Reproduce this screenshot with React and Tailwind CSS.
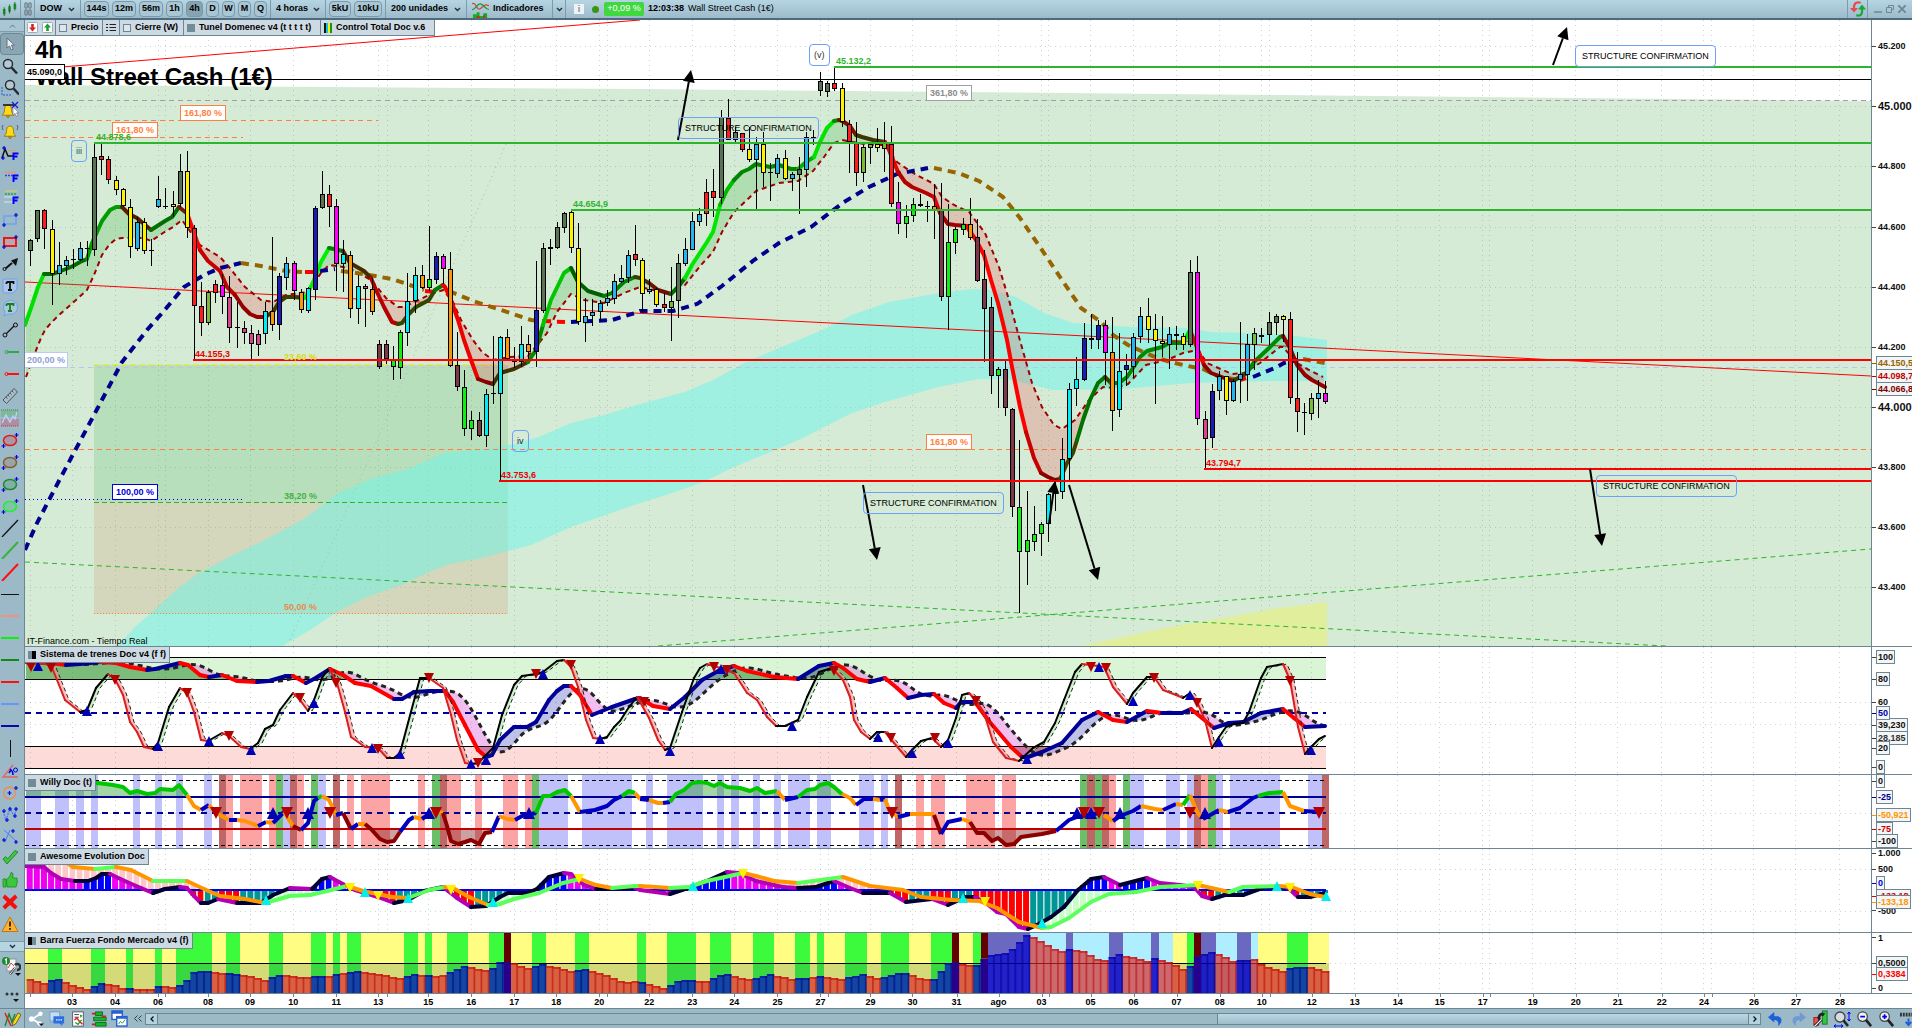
import React from "react";

/* ---------- shared geometry ---------- */
const X0 = 25;
const W = 1846;
const START = 30.2;
const STEP = 7.117;
const barX = (i) => START + STEP * i;

const P = (s) => s.trim().split(/\s+/).map((p) => p.split(",").map(Number));
const at = (pts, x) => {
  if (x <= pts[0][0]) return pts[0][1];
  for (let i = 1; i < pts.length; i++) {
    if (x <= pts[i][0]) {
      const [ax, ay] = pts[i - 1];
      const [bx, by] = pts[i];
      return bx === ax ? by : ay + ((by - ay) * (x - ax)) / (bx - ax);
    }
  }
  return pts[pts.length - 1][1];
};
const between = (a, b, x0, x1) => {
  const runs = [];
  let run = null;
  for (let x = x0; x <= x1; x += 2) {
    const above = a(x) < b(x);
    if (!run || run.above !== above) {
      if (run) run.xs.push(x);
      run = { above, xs: [x] };
      runs.push(run);
    } else run.xs.push(x);
  }
  return runs.map((r) => ({
    above: r.above,
    points: [...r.xs.map((x) => `${x},${a(x)}`), ...[...r.xs].reverse().map((x) => `${x},${b(x)}`)].join(" "),
  }));
};

/* ---------- price data ---------- */
const CANDLES = `D,239,240,251,266 D,210,210,239,242 R,209,210,229,249 Y,220,229,274,305 S,242,265,274,285 S,256,260,266,275 K,249,259,260,269 S,242,248,260,261 K,241,248,249,266 D,143,157,250,256
R,143,156,160,175 R,156,159,180,184 Y,176,180,190,195 Y,188,189,206,207 Y,199,207,247,258 S,217,222,249,251 Y,218,222,251,254 K,239,250,251,266 S,176,199,207,208 K,188,206,207,209
Y,191,204,207,217 D,154,171,204,207 Y,151,171,228,238 R,225,228,306,360 R,282,306,323,336 O,290,292,323,325 R,280,284,293,303 M,274,285,297,314 P,276,297,328,343 K,302,327,328,348
P,321,328,333,344 P,325,333,344,360 P,330,334,345,356 C,302,311,334,344 A,237,311,325,331 B,273,276,325,340 S,257,263,278,290 M,261,263,291,300 A,289,292,310,313 C,287,288,311,313
B,206,208,290,300 D,171,194,208,209 R,185,194,207,227 M,199,206,264,291 C,240,254,264,292 A,251,255,309,318 C,275,286,309,324 P,284,286,289,327 A,278,289,312,315 W,340,344,367,369
W,340,344,359,364 L,346,359,367,380 L,330,332,368,379 C,273,301,333,346 C,267,275,301,313 A,265,275,288,289 L,226,279,288,291 B,252,256,280,284 M,254,256,269,284 A,252,269,366,367
W,332,365,387,391 L,370,387,429,436 L,411,420,429,440 W,412,420,436,437 C,389,394,436,447 K,336,393,394,404 C,336,337,394,481 A,329,337,359,360 Y,347,359,362,368 C,326,344,362,367
A,335,344,352,361 B,261,310,352,367 D,243,248,311,313 K,239,247,249,265 D,222,227,248,249 D,212,213,228,233 Y,210,212,248,253 Y,223,248,322,325 S,298,316,323,342 S,299,312,316,326
S,300,303,312,321 S,290,298,303,306 S,274,281,299,304 S,265,278,282,283 S,250,255,278,283 R,225,254,260,266 Y,258,260,294,313 S,279,289,292,294 Y,288,289,305,307 R,293,304,308,312
O,267,301,308,341 D,254,263,301,318 S,238,249,264,266 S,212,221,250,250 S,208,214,222,226 R,179,192,214,226 R,169,191,198,217 D,110,117,198,204 R,99,118,140,140 D,127,132,140,142
R,133,133,150,152 Y,127,149,160,162 S,137,144,160,209 Y,132,144,173,187 K,163,172,173,201 S,154,158,174,178 Y,150,158,179,180 S,172,174,179,191 D,157,169,175,214 S,132,137,170,187
K,130,137,138,145 D,72,81,91,96 D,81,83,92,97 R,67,83,89,91 Y,83,88,122,127 R,120,124,142,173 R,122,142,173,186 O,145,147,173,182 O,143,144,148,164 Y,128,144,148,152
O,122,143,149,172 R,126,144,204,207 M,182,202,224,234 L,205,216,224,238 L,198,204,216,222 P,194,204,206,207 K,201,206,207,222 A,184,206,210,239 W,183,209,297,301 L,204,242,297,330
L,227,229,243,254 L,218,224,230,235 A,198,224,238,240 W,219,237,281,282 W,250,279,309,362 W,297,307,376,394 L,367,369,376,408 W,361,369,408,416 W,408,409,507,517 L,440,507,552,613
L,491,540,552,585 L,506,534,542,551 L,522,524,534,556 C,493,494,524,542 C,479,490,494,511 C,438,459,492,499 C,383,389,459,480 C,357,379,389,406 B,323,338,380,381 M,314,338,340,349
B,320,325,340,349 M,320,325,353,385 A,317,352,411,431 C,333,371,410,417 B,354,365,370,386 S,333,337,367,378 S,307,316,337,343 Y,298,316,330,343 Y,314,329,341,404 Y,316,341,344,357
S,327,334,345,369 S,326,334,336,350 Y,333,336,345,350 D,260,272,345,347 M,256,272,419,425 P,411,419,439,468 B,384,391,438,448 S,371,376,391,400 Y,376,376,401,415 S,379,381,401,402
S,322,374,380,403 S,334,344,375,401 O,328,333,345,370 D,328,335,337,343 D,312,322,335,345 D,314,316,323,335 Y,315,316,320,342 R,312,319,398,404 R,352,398,412,432 K,403,412,413,435
O,393,398,414,420 S,380,393,399,418 M,381,393,402,404`
  .trim()
  .split(/\s+/)
  .map((c) => {
    const [k, h, t, b, l] = c.split(",");
    return { k, h: +h, t: +t, b: +b, l: +l };
  });

const TONE = {
  D: "#5b7355", R: "#ff1c1c", Y: "#fff200", S: "#25b4ee", C: "#00edf4", K: "#000000", L: "#10f010",
  O: "#7cb83a", M: "#ff00ff", P: "#d8458c", A: "#f8960e", W: "#7c3848", B: "#1c1cb4",
};

const FAST = [
  ["#00e000", "25,325 31,308 38,287 44,274"],
  ["#006b00", "44,274 52,274 58,272 66,269 73,266 80,262 87,259"],
  ["#009c00", "87,259 92,243 102,221 110,210 116,207 122,207"],
  ["#5c1c00", "122,207 129,214 137,218 144,224 151,230"],
  ["#007000", "151,230 165,221 172,217 179,207"],
  ["#7a1800", "179,207 184,211 187,213"],
  ["#ff0000", "187,213 193,230 200,250"],
  ["#c40000", "200,250 208,261 220,271 227,287 235,295"],
  ["#960000", "235,295 243,307 250,314 257,317 265,317"],
  ["#3c3c00", "265,317 273,312 279,302 286,297 293,297 304,298"],
  ["#00f000", "304,298 307,295 314,280 321,262 329,248"],
  ["#008200", "329,248 343,251"],
  ["#4c2a00", "343,251 350,263 364,271 371,278"],
  ["#b40000", "371,278 376,290 384,307 392,322 398,324"],
  ["#2f4a00", "398,324 402,323 408,315 416,307 429,300 435,290"],
  ["#007a00", "435,290 443,285"],
  ["#f00000", "443,285 445,287 450,297 458,320 464,340 471,360 478,379"],
  ["#8c0000", "478,379 486,382 493,384"],
  ["#3e3200", "493,384 500,373 514,369 528,362"],
  ["#008a00", "528,362 536,350 543,325"],
  ["#00c800", "543,325 551,300 564,273 571,268"],
  ["#006000", "571,268 578,282 588,291 604,296"],
  ["#008000", "604,296 612,293 624,282 635,277"],
  ["#3e3a00", "635,277 640,278 649,283"],
  ["#701000", "649,283 658,290 671,294"],
  ["#006c00", "671,294 678,287 685,278"],
  ["#00e800", "685,278 692,265 707,242 713,232 720,205"],
  ["#00bc00", "720,205 727,190 734,180"],
  ["#008600", "734,180 742,172 749,169 756,164 770,167 779,165 791,169 798,169"],
  ["#00b400", "798,169 806,162 814,157"],
  ["#00e400", "814,157 820,142 827,128 834,121"],
  ["#008a00", "834,121 839,120"],
  ["#7a1000", "839,120 844,122 850,126 856,135"],
  ["#403400", "856,135 862,137 873,140 885,142"],
  ["#e80000", "885,142 887,145 891,155 898,172"],
  ["#b40000", "898,172 905,182 912,187 926,193 934,197"],
  ["#e80000", "934,197 940,213"],
  ["#a40000", "940,213 948,224 955,225 967,226"],
  ["#ff0000", "967,226 969,230 976,240 984,255 991,280 998,303 1007,340 1012,367 1020,407 1026,432"],
  ["#c80000", "1026,432 1034,458 1041,473"],
  ["#8c0000", "1041,473 1048,477 1055,480 1060,479"],
  ["#3c4400", "1060,479 1062,475 1067,463 1073,453 1077,440"],
  ["#007400", "1077,440 1083,420 1090,400 1098,383 1105,377"],
  ["#3e3a00", "1105,377 1111,383"],
  ["#008600", "1111,383 1119,383 1127,377 1133,368 1140,357 1147,351 1162,347 1169,343 1183,343"],
  ["#00e000", "1183,343 1190,330"],
  ["#f00000", "1190,330 1198,350 1204,365"],
  ["#8a0000", "1204,365 1211,373 1227,379 1233,381"],
  ["#3c3c00", "1233,381 1247,373"],
  ["#008a00", "1247,373 1254,362 1269,348 1280,337 1283,336"],
  ["#960000", "1283,336 1290,348 1297,365 1305,375 1312,380 1325,387"],
];
const FAST_PTS = FAST.flatMap(([, s]) => P(s));
const SIGNAL = "26,377 35,353 41,338 45,330 51,323 59,315 67,308 76,300 87,290 94,275 102,255 109,245 116,239 122,238 144,238 151,241 163,233 173,227 182,220 200,245 220,257 229,267 245,287 261,300 273,302 286,295 300,293 308,292 321,273 329,265 343,267 355,271 371,280 386,298 398,307 404,307 429,295 443,290 453,302 461,320 473,340 482,352 493,360 510,357 528,356 539,343 547,333 557,312 571,294 584,300 604,303 624,293 640,287 671,294 685,285 701,265 713,252 722,232 734,212 749,198 756,191 779,183 798,181 813,171 824,157 834,143 842,140 869,145 885,145 897,162 913,173 934,184 942,197 954,205 969,212 985,233 999,267 1009,300 1019,337 1032,383 1042,407 1054,425 1062,429 1075,420 1089,400 1103,387 1115,388 1128,384 1146,365 1167,360 1183,353 1198,350 1207,363 1232,374 1244,373 1260,363 1280,347 1283,347 1297,363 1309,370 1323,377";
const SIGNAL_PTS = P(SIGNAL);
const NAVY = "#00008c";
const OCHRE = "#966400";
const LONG = [
  [NAVY, "25,550 37,523 61,477 94,415 122,362 147,330 163,312 184,287 204,275 220,268 241,263"],
  [OCHRE, "241,263 261,266 286,271 302,272"],
  ["#ff0000", "305,272 314,272"],
  [NAVY, "320,271 335,269"],
  [OCHRE, "341,271 363,274 392,279 416,287 424,290"],
  ["#ff0000", "425,291 436,292"],
  [OCHRE, "449,291 473,301 498,309 531,320 543,321"],
  ["#ff0000", "543,321 565,322"],
  [NAVY, "571,322 612,320 635,313 640,311 673,311 697,304 722,286 754,260 779,243 811,227 844,202 869,187 897,174 928,168"],
  [OCHRE, "934,168 958,173 979,181 1003,197 1020,218 1040,247 1060,277 1081,308 1101,322 1113,335 1128,345 1150,355 1167,361 1183,365 1203,369 1220,377 1240,380"],
  ["#ff0000", "1240,380 1246,378"],
  [NAVY, "1253,377 1277,367 1284,363 1298,360"],
  [OCHRE, "1303,359 1325,363"],
];
const CLOUD = "118,646 135,627 151,613 176,590 196,575 233,555 261,542 302,520 339,493 371,479 408,469 445,453 486,449 514,444 539,437 571,423 604,415 640,404 685,392 713,380 746,362 820,331 852,315 889,302 934,294 971,289 991,290 1016,297 1044,313 1073,323 1130,327 1187,328 1211,332 1277,334 1296,336 1327,340 1327,381 1272,381 1191,383 1122,389 1052,390 1028,384 1007,379 979,379 938,387 885,402 852,413 828,425 803,438 775,450 734,467 701,483 669,494 640,503 571,527 531,545 482,558 449,564 429,572 404,584 367,597 335,613 310,630 282,646";

/* ---------- time axis ---------- */
const DAYS = "72:03 115:04 158:06 208:08 250:09 293:10 336:11 378:13 428:15 471:16 514:17 556:18 599:20 649:22 692:23 734:24 777:25 820:27 870:29 912:30 956:31 998:ago 1041:03 1090:05 1133:06 1176:07 1219:08 1261:10 1311:12 1354:13 1397:14 1439:15 1482:17 1532:19 1575:20 1617:21 1661:22 1703:24 1753:26 1795:27 1839:28"
  .split(" ")
  .map((d) => { const [x, t] = d.split(":"); return { x: +x, t }; });
const GRID_X = [30, ...DAYS.map((d) => d.x), 165, 387, 607, 828, 1048, 1269, 1489, 1711];

/* ---------- generic pieces ---------- */
const pctX = (x) => `${((x - X0) / W) * 100}%`;

function Grid({ y0, h, rows = [] }) {
  return (
    <g stroke="#7f8f86" strokeOpacity="0.38" strokeWidth="1" strokeDasharray="1 4" shapeRendering="crispEdges">
      {GRID_X.map((x) => <line key={x} x1={x} x2={x} y1={y0} y2={y0 + h} />)}
      {rows.map((y) => <line key={y} x1={X0} x2={X0 + W} y1={y} y2={y} />)}
    </g>
  );
}

function Row({ y0, h, axis, title, children, overlay }) {
  return (
    <div className="flex min-h-0 border-b border-[#6c8791]">
      <div className="relative min-w-0 flex-1 overflow-hidden border-r border-[#6c8791] bg-white">
        <svg className="absolute inset-0 h-full w-full" viewBox={`${X0} ${y0} ${W} ${h}`} preserveAspectRatio="none">
          {children}
        </svg>
        {overlay}
        {title}
      </div>
      <div className="relative w-10 shrink-0 overflow-hidden bg-white">
        {axis.map(([v, y, kind, color], i) => (
          <div key={i} className="absolute left-0 flex -translate-y-1/2 items-center" style={{ top: `${((y - y0) / h) * 100}%` }}>
            <span className="h-px w-1 shrink-0" style={{ backgroundColor: color || "#3c4a50" }} />
            <span
              className={
                kind === "box"
                  ? "border border-[#6c8791] bg-[#f3f5f6] px-px text-[9px] leading-3 font-bold whitespace-nowrap"
                  : kind === "big"
                  ? "px-0.5 text-[11px] leading-3 font-bold whitespace-nowrap"
                  : "px-0.5 text-[9px] leading-3 font-bold whitespace-nowrap"
              }
              style={{ color: color || "#101010" }}
            >
              {v}
            </span>
          </div>
        ))}
      </div>
    </div>
  );
}

function Title({ text, swatch }) {
  return (
    <button className="absolute top-0 left-0 flex h-4 items-center gap-1 border-r border-b border-[#6c8791] bg-[#cddae3] px-[3px] text-[9px] font-bold text-black">
      <span className="flex h-2 w-2">{swatch.map((c, i) => <span key={i} className="h-2 flex-1" style={{ backgroundColor: c }} />)}</span>
      {text}
    </button>
  );
}

function Tri({ x, y, up, color, s = 6 }) {
  const d = up ? -1 : 1;
  return <polygon points={`${x - s},${y - s * d} ${x + s},${y - s * d} ${x},${y + s * d}`} fill={color} />;
}

/* ---------- main price chart ---------- */
const Y0 = 20;
const H = 626;
const pctY = (y) => `${((y - Y0) / H) * 100}%`;

function Tag({ x, y, className, children }) {
  return (
    <span className={`absolute -translate-y-1/2 text-[9px] leading-3 whitespace-nowrap ${className}`} style={{ left: pctX(x), top: pctY(y) }}>
      {children}
    </span>
  );
}

function Arrow({ x1, y1, x2, y2 }) {
  const a = Math.atan2(y2 - y1, x2 - x1);
  const bx = x2 - 12 * Math.cos(a);
  const by = y2 - 12 * Math.sin(a);
  const nx = -Math.sin(a) * 6;
  const ny = Math.cos(a) * 6;
  return (
    <g>
      <line x1={x1} y1={y1} x2={bx} y2={by} stroke="#000" strokeWidth="2" />
      <polygon points={`${x2},${y2} ${bx + nx},${by + ny} ${bx - nx},${by - ny}`} fill="#000" />
    </g>
  );
}

const PRICE_AXIS = [
  ["45.200", 46], ["45.000", 106, "big"], ["44.800", 166], ["44.600", 227], ["44.400", 287], ["44.200", 347],
  ["44.000", 407, "big"], ["43.800", 467], ["43.600", 527], ["43.400", 587],
  ["44.150,5", 363, "box", "#966400"], ["44.098,7", 376, "box", "#c00000"], ["44.066,8", 389, "box", "#800000"],
];

function MainChart() {
  const ribbons = between((x) => at(FAST_PTS, x), (x) => at(SIGNAL_PTS, x), 26, 1325);
  const hl = (y, x, c, extra) => <line key={`${y}-${x}`} x1={x} x2={1871} y1={y} y2={y} stroke={c} {...extra} />;
  return (
    <Row
      y0={Y0}
      h={H}
      axis={PRICE_AXIS}
      title={
        <div className="absolute top-0 left-0 flex h-4 items-stretch border-r border-b border-[#6c8791] bg-[#cddae3] text-[9px] font-bold text-black">
          <div className="flex w-[31px] items-center justify-center gap-1 border-r border-[#6c8791]">
            <MiniArrow color="#e02020" down />
            <MiniArrow color="#18a030" />
          </div>
          <button className="flex w-[47px] items-center gap-1 border-r border-[#6c8791] pl-[3px]"><i className="h-2 w-2 border border-[#6c8791] bg-[#dde6ec]" />Precio</button>
          <button className="flex w-[17px] items-center justify-center border-r border-[#6c8791]" aria-label="Lista">
            <svg width="10" height="9" viewBox="0 0 10 9" stroke="#222" fill="none"><path d="M0 1.5h2M3.5 1.5H10M0 4.5h2M3.5 4.5H10M0 7.5h2M3.5 7.5H10" /></svg>
          </button>
          <button className="flex w-[64px] items-center gap-1 border-r border-[#6c8791] pl-[3px]"><i className="h-2 w-2 border border-[#6c8791] bg-[#dde6ec]" />Cierre (W)</button>
          <button className="flex w-[137px] items-center gap-1 border-r border-[#6c8791] pl-[3px] whitespace-nowrap"><i className="h-2 w-2 bg-[#718b97]" />Tunel Domenec v4 (t t t t t)</button>
          <button className="flex w-[113px] items-center gap-1 pl-[3px] whitespace-nowrap">
            <i className="flex h-[10px] w-2">
              <b className="flex-1 bg-[#111]" /><b className="flex-1 bg-[#00c8e8]" /><b className="flex-1 bg-[#fff000]" /><b className="flex-1 bg-[#1a8f1a]" />
            </i>
            Control Total Doc v.6
          </button>
        </div>
      }
      overlay={
        <>
          <span className="absolute -translate-y-1/2 text-2xl leading-7 font-bold" style={{ left: pctX(35), top: pctY(50) }}>4h</span>
          <span className="absolute -translate-y-1/2 text-2xl leading-7 font-bold whitespace-nowrap" style={{ left: pctX(35), top: pctY(77) }}>Wall Street Cash (1€)</span>
          <Tag x={25} y={72} className="border border-l-0 border-black bg-white px-[2px] py-px font-bold">45.090,0</Tag>
          <Tag x={180} y={113} className="border border-[#ff7f40] bg-white px-[3px] py-px font-bold text-[#ff7f40]">161,80 %</Tag>
          <Tag x={112} y={130} className="border border-[#ff7f40] bg-white px-[3px] py-px font-bold text-[#ff7f40]">161,80 %</Tag>
          <Tag x={96} y={137} className="font-bold text-[#2db52d]">44.878,6</Tag>
          <Tag x={71} y={151} className="rounded border border-[#6fa0f5] px-1 py-1 text-[#22556a]">iii</Tag>
          <Tag x={809} y={55} className="rounded border border-[#6fa0f5] bg-white px-1 py-1 text-[#333]">(v)</Tag>
          <Tag x={512} y={441} className="rounded border border-[#6fa0f5] px-1 py-1 text-[#223]">iv</Tag>
          <Tag x={836} y={61} className="font-bold text-[#2db52d]">45.132,2</Tag>
          <Tag x={573} y={204} className="font-bold text-[#2db52d]">44.654,9</Tag>
          <Tag x={926} y={93} className="border border-[#a0a0a0] bg-white px-[3px] py-px font-bold text-[#8c8c8c]">361,80 %</Tag>
          <Tag x={926} y={442} className="border border-[#ff7f40] bg-white px-[3px] py-px font-bold text-[#ff7f40]">161,80 %</Tag>
          <Tag x={678} y={128} className="rounded border border-[#6fa0f5] px-[6px] py-1 text-black">STRUCTURE CONFIRMATION</Tag>
          <Tag x={1575} y={56} className="rounded border border-[#6fa0f5] bg-white px-[6px] py-1 text-black">STRUCTURE CONFIRMATION</Tag>
          <Tag x={863} y={503} className="rounded border border-[#6fa0f5] px-[6px] py-1 text-black">STRUCTURE CONFIRMATION</Tag>
          <Tag x={1596} y={486} className="rounded border border-[#6fa0f5] px-[6px] py-1 text-black">STRUCTURE CONFIRMATION</Tag>
          <Tag x={195} y={354} className="font-bold text-[#f00000]">44.155,3</Tag>
          <Tag x={501} y={475} className="font-bold text-[#f00000]">43.753,6</Tag>
          <Tag x={1206} y={463} className="font-bold text-[#f00000]">43.794,7</Tag>
          <Tag x={25} y={360} className="border border-l-0 border-[#bcc8f6] bg-white px-[2px] py-px font-bold text-[#8e9fd2]">200,00 %</Tag>
          <Tag x={284} y={357} className="font-bold text-[#d8d820]">23,60 %</Tag>
          <Tag x={284} y={496} className="font-bold text-[#3fb53f]">38,20 %</Tag>
          <Tag x={284} y={607} className="font-bold text-[#e8894e]">50,00 %</Tag>
          <Tag x={112} y={492} className="border border-[#0000dc] bg-white px-[3px] py-px font-bold text-[#0000dc]">100,00 %</Tag>
          <Tag x={27} y={641} className="text-black">IT-Finance.com - Tiempo Real</Tag>
        </>
      }
    >
      <polygon points="25,85 640,89 1280,95 1871,101 1871,646 25,646" fill="#d5ebd6" />
      <Grid y0={Y0} h={H} rows={[46, 106, 166, 227, 287, 347, 407, 467, 527, 587]} />
      <polygon points="1081,646 1171,627 1252,613 1272,609 1327,602 1327,646" fill="#e1ee9c" />
      <rect x="94" y="365" width="414" height="137" fill="rgb(57,174,64)" fillOpacity="0.18" />
      <rect x="94" y="502" width="414" height="112" fill="rgb(213,129,64)" fillOpacity="0.18" />
      <polygon points={CLOUD} fill="rgb(105,245,234)" fillOpacity="0.5" />
      <line x1="290" y1="640" x2="506" y2="144" stroke="#9fbf9f" strokeDasharray="1 4" />
      <g shapeRendering="crispEdges" fill="none">
        {hl(79.5, 25, "#000")}
        {hl(100.5, 25, "#a79aab", { strokeDasharray: "5 4" })}
        {hl(449.5, 25, "#ff7f40", { strokeDasharray: "5 4" })}
        {hl(367.5, 25, "#bcc3f4", { strokeDasharray: "5 4" })}
        <path d="M25 120.500H378M25 137.500H243" stroke="#ff7f40" strokeDasharray="5 4" />
        <path d="M25 499.500H243" stroke="#0000c8" strokeDasharray="1 3" />
        <path d="M94 364.500H508" stroke="#f4f400" strokeWidth="1" strokeDasharray="6 3" />
        <path d="M94 502.500H508" stroke="#2db52d" strokeDasharray="5 3" />
        <path d="M94 613.500H508" stroke="#ff7f40" strokeDasharray="1 2" />
      </g>
      <path d="M25 562L1666 646M658 646L1871 549" stroke="#2db52d" strokeDasharray="5 4" fill="none" />
      <path d="M25 70L640 20M25 282L1871 376" stroke="#ff0000" strokeWidth="1" fill="none" />
      {ribbons.map((r, i) => (
        <polygon key={i} points={r.points} fill={r.above ? "rgb(50,175,50)" : "rgb(240,60,60)"} fillOpacity="0.22" />
      ))}
      <polyline points={SIGNAL} fill="none" stroke="#a00000" strokeWidth="2" strokeDasharray="5 4" />
      {LONG.map(([c, s], i) => <polyline key={i} points={s} fill="none" stroke={c} strokeWidth="4" strokeDasharray="8 6" />)}
      {FAST.map(([c, s], i) => <polyline key={i} points={s} fill="none" stroke={c} strokeWidth="4" strokeLinejoin="round" strokeLinecap="round" />)}
      <g shapeRendering="crispEdges">
        {CANDLES.map((c, i) => {
          const x = Math.round(barX(i));
          return (
            <g key={i}>
              <rect x={x} y={c.h} width="1" height={Math.max(1, c.l - c.h)} fill="#000" />
              <rect x={x - 2} y={c.t} width="5" height={Math.max(1, c.b - c.t)} fill="#000" />
              {c.b - c.t > 2 && <rect x={x - 1} y={c.t + 1} width="3" height={c.b - c.t - 2} fill={TONE[c.k]} />}
            </g>
          );
        })}
      </g>
      <g shapeRendering="crispEdges">
        {[[67, 834], [143, 94], [210, 571]].map(([y, x]) => hl(y, x, "#2db52d", { strokeWidth: 2 }))}
        {[[360, 193], [481, 499], [469, 1204]].map(([y, x]) => hl(y, x, "#ff0000", { strokeWidth: 2 }))}
      </g>
      <Arrow x1={678} y1={140} x2={691} y2={70} />
      <Arrow x1={1553} y1={65} x2={1567} y2={27} />
      <Arrow x1={863} y1={485} x2={877} y2={560} />
      <Arrow x1={1069} y1={485} x2={1098} y2={580} />
      <Arrow x1={1049} y1={524} x2={1055} y2={481} />
      <Arrow x1={1590} y1={469} x2={1602} y2={546} />
    </Row>
  );
}

function MiniArrow({ color, down }) {
  return (
    <svg width="11" height="11" viewBox="0 0 11 11">
      <rect x="0.500" y="0.500" width="10" height="10" rx="1" fill="#fff" stroke="#9aacb6" />
      <path d={down ? "M5.500 9.500L2 5.500h2.200V2h2.600v3.500H9z" : "M5.500 1.500L2 5.500h2.200V9h2.600V5.500H9z"} fill={color} />
    </svg>
  );
}

/* ---------- "Sistema de trenes" ---------- */
const OSC = P("25,663 44,664 51,665 65,700 80,712 87,710 96,688 108,674 115,679 123,695 130,722 137,732 144,747 153,749 158,743 169,707 180,688 187,693 194,712 201,740 208,741 222,733 229,736 241,747 250,749 258,743 265,729 273,725 280,710 293,693 300,700 308,711 314,700 322,678 329,668 337,683 345,712 351,737 365,747 378,748 387,758 394,758 400,753 408,723 420,678 429,678 443,688 451,715 457,740 465,763 471,764 478,763 486,755 493,748 502,715 514,685 522,676 536,674 543,672 557,661 564,660 571,667 578,687 586,720 593,738 600,739 607,737 614,727 620,721 629,707 637,697 640,702 649,718 658,740 665,750 670,748 682,712 694,678 700,668 707,664 720,668 734,673 747,693 757,700 767,717 776,726 785,726 798,720 807,697 819,672 832,668 843,680 850,697 854,720 861,732 870,739 877,732 885,732 894,743 906,757 912,750 921,741 932,738 941,747 948,740 956,718 962,695 969,693 977,702 984,713 993,742 1006,758 1019,761 1033,748 1044,742 1055,723 1064,700 1075,672 1082,664 1091,665 1104,667 1113,687 1127,704 1133,693 1147,677 1154,677 1163,690 1176,695 1183,698 1190,693 1197,702 1205,720 1212,748 1219,737 1226,727 1234,724 1243,723 1249,712 1261,678 1267,667 1283,664 1290,680 1298,727 1305,754 1311,747 1319,739 1325,736");
const TREND = P("25,662 51,663 66,665 80,664 100,662 116,663 130,667 147,670 155,669 180,663 188,665 200,675 209,677 222,675 237,681 257,682 269,681 286,676 293,676 306,683 314,679 330,669 343,675 355,683 371,686 394,699 402,699 414,692 429,691 445,691 453,702 465,725 478,750 486,757 492,755 500,740 514,727 527,727 536,722 549,700 557,691 564,686 571,686 580,695 592,715 612,707 635,699 640,698 653,706 670,709 685,697 702,680 720,670 734,666 747,671 774,677 798,679 819,666 834,663 843,668 857,679 870,682 885,678 897,688 908,698 921,695 934,694 944,703 956,708 961,702 975,702 988,720 1011,747 1022,757 1028,757 1042,752 1062,743 1082,720 1098,712 1113,720 1127,722 1147,711 1162,713 1182,713 1191,709 1202,718 1214,728 1229,723 1243,722 1261,713 1283,709 1294,718 1305,727 1325,726");
const lagged = (x) => {
  let t = 0;
  for (let k = 4; k <= 26; k += 2) t += at(TREND, x - k);
  return t / 12;
};
const poly = (fn, x0, x1, step = 3) => {
  const out = [];
  for (let x = x0; x <= x1; x += step) out.push(`${x},${fn(x).toFixed(1)}`);
  return out.join(" ");
};
const colored = (pts, up, down) =>
  pts.slice(1).map((p, i) => ({ a: pts[i], b: p, c: p[1] > pts[i][1] ? down : up }));

const T1_DOWN = P("31,667 51,668 115,680 187,693 229,736 300,698 336,683 378,749 429,678 478,763 536,674 571,665 644,702 714,667 727,670 834,671 891,738 935,738 976,701 1091,667 1106,668 1154,678 1197,703 1290,681");
const T1_UP = P("38,666 87,711 158,746 209,741 251,750 314,703 372,748 400,754 471,764 486,760 543,674 600,739 670,751 721,669 792,726 878,737 912,753 948,743 1027,759 1099,667 1133,701 1190,695 1219,742 1311,750");

function Segs({ pts, up, down, w }) {
  return colored(pts, up, down).map((s, i) => (
    <line key={i} x1={s.a[0]} y1={s.a[1]} x2={s.b[0]} y2={s.b[1]} stroke={s.c} strokeWidth={w} strokeLinecap="round" />
  ));
}

function TrenesChart() {
  const tr = (x) => at(TREND, x);
  const osc = (x) => at(OSC, x);
  return (
    <Row
      y0={647}
      h={127}
      title={<Title text="Sistema de trenes Doc v4 (f f)" swatch={["#718b97", "#000"]} />}
      axis={[
        ["100", 657, "box"], ["80", 679, "box"], ["60", 702], ["39,230", 725, "box"], ["28,185", 738, "box", "#333"],
        ["20", 748, "box"], ["50", 713, "box", "#0000a8"], ["0", 767, "box"],
      ]}
    >
      <rect x="25" y="657" width="1301" height="22" fill="#d9f5d5" />
      <rect x="25" y="746" width="1301" height="22" fill="#fddbd9" />
      <Grid y0={647} h={127} rows={[702, 724]} />
      {between(tr, () => 679, 26, 1325).filter((r) => r.above).map((r, i) => <polygon key={i} points={r.points} fill="#0a780a" fillOpacity="0.45" />)}
      {between(() => 746, tr, 26, 1325).filter((r) => r.above).map((r, i) => <polygon key={i} points={r.points} fill="#8c2020" fillOpacity="0.5" />)}
      {between(tr, lagged, 30, 1325).map((r, i) => <polygon key={i} points={r.points} fill={r.above ? "#7078cc" : "#e070dc"} fillOpacity="0.45" />)}
      {between(osc, (x) => osc(x - 4), 30, 1325).map((r, i) => <polygon key={i} points={r.points} fill={r.above ? "#a8e8a8" : "#ff9090"} fillOpacity="0.6" />)}
      <path d="M25 657.500H1326M25 679.500H1326M25 746.500H1326M25 768.500H1326" stroke="#000" shapeRendering="crispEdges" />
      <path d="M25 713H1326" stroke="#0000a0" strokeWidth="2" strokeDasharray="6 5" shapeRendering="crispEdges" />
      <polyline points={poly(lagged, 30, 1325)} fill="none" stroke="#222" strokeWidth="3" strokeDasharray="5 4" />
      <Segs pts={TREND} up="#000096" down="#ff0000" w="4" />
      <polyline points={poly((x) => osc(x - 4), 30, 1325, 2)} fill="none" stroke="#222" strokeWidth="1" strokeDasharray="4 3" />
      <Segs pts={OSC} up="#000" down="#d82020" w="2" />
      {T1_DOWN.map(([x, y]) => <Tri key={x} x={x} y={y} s={5} color="#b40000" />)}
      {T1_UP.map(([x, y]) => <Tri key={x} x={x} y={y} s={5} up color="#0000b4" />)}
    </Row>
  );
}

/* ---------- "Willy" ---------- */
const WILLY_BANDS = {
  "#c0c0fb": "26,41 55,69 76,84 91,98 133,140 155,162 176,183 204,212 283,290 318,326 539,568 582,632 646,653 667,703 717,724 731,739 753,760 774,781 788,810 817,831 859,874 881,888 1130,1144 1166,1180 1187,1194 1216,1223 1230,1280 1308,1322",
  "#fca3a3": "226,233 240,262 269,276 297,304 347,354 361,390 418,425 447,461 475,482 503,518 525,532 916,924 931,945 966,995 1002,1016 1109,1116 1201,1208",
  "#bf6767": "219,226 290,297 333,340 440,447 895,902 1087,1095 1102,1109 1194,1201 1322,1329",
  "#69c069": "276,283 311,318 432,440 532,539 1080,1087 1095,1102 1123,1130 1208,1216",
};
const G = "#00c800", O = "#ff9600", B = "#0000c0", D = "#8c0000";
const WILLY = [
  [G, "25,784 98,783 113,785 123,787 130,793 137,791 147,794 155,793 160,789 173,790 179,785 187,795"],
  [O, "187,795 194,806 201,810"], [B, "201,810 209,805"], [O, "209,805 216,813 229,820"], [B, "229,820 237,820"],
  [O, "237,820 245,821 258,826"], [B, "258,826 266,822"], [O, "266,822 273,823"], [B, "273,823 284,812"],
  [O, "284,812 293,826"], [D, "293,826 301,830"], [B, "301,830 308,823 314,801 318,798"], [G, "318,798 322,796"],
  [O, "322,796 329,800 336,815"], [B, "336,815 343,813"], [D, "343,813 351,829"], [B, "351,829 358,824"], [O, "358,824 365,824"],
  [D, "365,824 371,829 380,839 387,842 394,841 400,832"], [B, "400,832 409,820 414,817"], [O, "414,817 422,819"], [B, "422,819 429,814"],
  [O, "429,814 436,811 443,813"], [D, "443,813 447,826 451,841 458,844 465,842 471,840 479,844 485,833 492,832"],
  [B, "492,832 499,816"], [O, "499,816 507,819 515,820"], [B, "515,820 522,816 536,813"], [G, "536,813 543,796 550,796 557,792 565,790 571,796"],
  [O, "571,796 580,812"], [B, "580,812 595,810 607,806 614,800 622,796"], [G, "622,796 629,791 635,793"], [O, "635,793 640,799"], [B, "640,799 649,800"],
  [O, "649,800 658,803 663,803"], [B, "663,803 670,802"],
  [G, "670,802 676,794 684,790 692,783 700,782 707,783 714,786 720,783 727,787 740,788 750,791 757,788 765,793 777,791"],
  [O, "777,791 785,800"], [B, "785,800 798,797"], [G, "798,797 807,790 815,789 820,785 828,783 834,787 842,794"], [O, "842,794 850,798 856,805"],
  [B, "856,805 864,799 873,799"], [O, "873,799 880,800"], [B, "880,800 885,799"], [O, "885,799 889,810 898,817"], [B, "898,817 910,814"], [O, "910,814 934,814"],
  [D, "934,815 941,834"], [B, "941,834 948,822 962,819"], [O, "962,819 970,822"],
  [D, "970,822 977,833 984,833 992,841 998,838 1006,845 1014,844 1021,837 1042,834 1056,831"], [B, "1056,831 1062,826 1069,820 1077,817 1100,813"],
  [O, "1104,815 1113,821"], [B, "1113,821 1120,816 1133,811 1141,806"], [O, "1141,806 1155,809 1163,810"], [B, "1163,810 1176,804"], [O, "1176,804 1183,805"],
  [G, "1183,805 1190,795"], [O, "1190,795 1197,812 1203,819"], [B, "1203,819 1212,814 1219,810"], [O, "1219,810 1228,812"], [B, "1228,812 1240,808 1253,798 1258,796"],
  [G, "1258,796 1269,793 1283,792"], [O, "1283,792 1290,806 1304,811"], [B, "1304,811 1319,812"],
];
const WILLY_PTS = WILLY.flatMap(([, s]) => P(s));

function WillyChart() {
  const w = (x) => at(WILLY_PTS, x);
  return (
    <Row
      y0={775}
      h={73}
      title={<Title text="Willy Doc (t)" swatch={["#718b97"]} />}
      axis={[
        ["0", 781, "box"], ["-25", 797, "box", "#000090"], ["-50,921", 815, "box", "#ff9600"], ["-75", 829, "box", "#c80000"], ["-100", 841, "box"],
      ]}
    >
      <Grid y0={775} h={73} rows={[813]} />
      {Object.entries(WILLY_BANDS).map(([c, s]) => P(s).map(([a, b]) => <rect key={c + a} x={a} y="775" width={b - a} height="73" fill={c} />))}
      {between(w, () => 797, 26, 1319).filter((r) => r.above).map((r, i) => <polygon key={i} points={r.points} fill="#1e961e" fillOpacity="0.4" />)}
      {between(() => 829, w, 26, 1319).filter((r) => r.above).map((r, i) => <polygon key={i} points={r.points} fill="#7d1414" fillOpacity="0.4" />)}
      <path d="M25 780.500H1326M25 845.500H1326" stroke="#000" strokeDasharray="4 3" shapeRendering="crispEdges" />
      <path d="M25 797H1326" stroke="#000090" strokeWidth="2" shapeRendering="crispEdges" />
      <path d="M25 829H1326" stroke="#c00000" strokeWidth="2" shapeRendering="crispEdges" />
      <path d="M25 813H1326" stroke="#000090" strokeWidth="2" strokeDasharray="6 5" shapeRendering="crispEdges" />
      {WILLY.map(([c, s], i) => <polyline key={i} points={s} fill="none" stroke={c} strokeWidth="4" strokeLinejoin="round" />)}
      {[273, 308, 429, 529, 1077, 1091, 1120, 1205].map((x) => <Tri key={x} x={x} y={813} up color="#0000b4" />)}
      {[216, 287, 330, 436, 892, 1084, 1099, 1190, 1319].map((x) => <Tri key={x} x={x} y={813} color="#b40000" />)}
    </Row>
  );
}

/* ---------- "Awesome Evolution" ---------- */
const AO = P("25,866 44,867 51,873 61,879 75,881 88,881 96,878 102,874 110,874 127,882 141,888 153,893 165,889 180,887 187,888 194,896 201,903 208,903 218,899 237,903 261,903 273,895 290,888 312,889 322,879 330,877 339,882 355,890 378,897 394,903 408,900 424,891 443,887 457,898 471,907 486,906 500,897 508,893 527,893 537,889 549,877 564,873 571,874 584,885 596,889 635,888 640,890 670,894 682,890 707,881 727,872 739,873 756,881 783,887 798,888 816,887 834,881 850,888 863,893 890,893 906,902 932,899 948,905 966,897 975,897 986,903 997,912 1006,914 1019,927 1028,929 1037,925 1051,917 1064,907 1078,890 1091,879 1104,877 1120,885 1147,878 1160,883 1180,885 1194,887 1202,896 1212,899 1225,895 1243,895 1265,887 1287,887 1298,897 1310,897 1325,893");
const AS = P("66,862 73,867 95,869 116,867 131,870 153,881 187,881 204,889 220,896 245,899 265,903 290,896 310,895 327,891 347,886 363,891 392,897 408,898 429,890 445,887 453,888 469,897 488,905 500,904 514,899 539,893 563,883 580,879 596,885 612,888 635,886 640,886 670,888 689,887 707,881 743,873 756,876 774,881 798,883 843,877 870,886 903,890 921,897 952,900 979,901 997,908 1019,922 1042,928 1051,927 1069,918 1091,902 1109,894 1136,892 1160,887 1198,885 1229,892 1243,887 1278,886 1292,887 1310,894 1325,897");
const ZERO = 890;

function AwesomeChart() {
  const a = (x) => at(AO, x);
  const s = (x) => at(AS, x);
  return (
    <Row
      y0={849}
      h={83}
      title={<Title text="Awesome Evolution Doc" swatch={["#718b97"]} />}
      axis={[
        ["1.000", 853], ["500", 869], ["-500", 911], ["0", 883, "box", "#0000e0"], ["-133,18", 896, "box", "#e00000"], ["-133,18", 902, "box", "#ff9600"],
      ]}
    >
      <Grid y0={849} h={83} rows={[869, 911]} />
      {CANDLES.map((_, i) => {
        const x = barX(i);
        const y = a(x);
        const m = s(x);
        const rising = a(x) <= a(x - 6);
        const pos = y < ZERO;
        const fill = pos ? (rising ? "#0000ff" : "#f000f0") : rising ? "#009696" : "#ff0000";
        return (
          <g key={i}>
            <rect x={x - 3.5} y={Math.min(y, m)} width="6" height={Math.abs(y - m)} fill={y > m ? "#ffc8c8" : "#c8ffc8"} />
            <rect x={x - 3.5} y={Math.min(y, ZERO)} width="6" height={Math.abs(y - ZERO)} fill={fill} />
            <rect x={x - 4.5} y={Math.min(y, m)} width="1" height={Math.abs(y - m)} fill="#fff" />
          </g>
        );
      })}
      <path d={`M25 ${ZERO}H1326`} stroke="#0000e6" strokeWidth="2" shapeRendering="crispEdges" />
      <Segs pts={AO} up="#000032" down="#b400b4" w="4" />
      <Segs pts={AS} up="#5aff5a" down="#ff9600" w="4" />
      {P("350,888 378,896 451,890 579,879 743,874 985,902 1198,886 1290,888").map(([x, y]) => <Tri key={x} x={x} y={y} s={5} color="#fff000" />)}
      {P("266,900 365,892 408,898 493,902 693,886 963,898 1042,923 1277,886 1326,896").map(([x, y]) => <Tri key={x} x={x} y={y} s={5} up color="#00f0f0" />)}
    </Row>
  );
}

/* ---------- "Barra Fuerza" ---------- */
const FORCE = P("30,979 45,983 48,980 61,979 67,983 87,989 94,986 101,983 116,985 122,988 151,989 158,986 176,987 184,983 194,972 208,971 220,973 241,974 265,980 282,974 304,978 314,976 331,976 339,973 359,971 380,974 400,978 414,974 440,976 447,973 464,966 486,970 493,968 498,962 510,962 527,968 543,964 556,967 573,971 586,969 606,975 624,982 637,981 640,981 665,988 680,980 707,981 725,973 747,980 769,974 792,979 821,976 841,979 863,974 879,978 903,972 923,979 935,979 948,963 957,962 961,964 977,965 988,955 1008,953 1019,942 1027,935 1035,937 1048,945 1060,952 1069,949 1084,951 1102,961 1120,954 1149,961 1153,958 1171,962 1182,969 1191,966 1198,955 1214,952 1234,961 1254,959 1265,966 1283,971 1294,967 1310,967 1327,971");
const FB = [
  ["#aeeeff", "1030,1173 1216,1258", false],
  ["#3cfa3c", "48,62 91,105 126,133 155,162 176,212 226,240 269,283 311,326 333,340 347,361 404,418 425,432 447,468 489,504 532,546 575,589 637,646 667,696 710,731 753,774 795,810 817,824 845,867 881,909 931,952 973,981 1187,1194 1287,1308", true],
  ["#6a68c0", "988,1030 1066,1073 1109,1123 1151,1159 1201,1216 1237,1251", true],
  ["#640000", "504,511 952,959 981,988 1194,1201", true],
];
const RISING = FB.filter((b) => b[2]).flatMap((b) => P(b[1]));

function ForceChart() {
  return (
    <Row
      y0={933}
      h={60}
      title={<Title text="Barra Fuerza Fondo Mercado v4 (f)" swatch={["#000", "#718b97"]} />}
      axis={[["1", 938], ["0,5000", 963, "box"], ["0,3384", 974, "box", "#ff0000"], ["0", 988]]}
    >
      <Grid y0={933} h={60} rows={[963]} />
      <rect x="25" y="933" width="1304" height="60" fill="#fffd82" />
      {FB.slice(0, 3).map(([c, s]) => P(s).map(([a, b]) => <rect key={c + a} x={a} y="933" width={b - a} height="60" fill={c} />))}
      <rect x="25" y="963" width="963" height="30" fill="#285050" fillOpacity="0.2" />
      <rect x="1173" y="963" width="156" height="30" fill="#285050" fillOpacity="0.2" />
      <path d="M25 963.500H1326" stroke="#000" shapeRendering="crispEdges" />
      {CANDLES.map((_, i) => {
        const x = barX(i);
        const y = Math.round(at(FORCE, x));
        const up = RISING.some(([a, b]) => x >= a - 1 && x <= b + 1);
        return (
          <g key={i}>
            <rect x={x - 3.5} y={y} width="7.2" height={993 - y} fill={up ? "#0000d2" : "#dc2828"} fillOpacity="0.68" />
            <rect x={x + 2} y={y} width="2" height={993 - y} fill={up ? "#000078" : "#b40000"} fillOpacity="0.5" />
            <rect x={x - 3.5} y={y} width="7.2" height="2" fill={up ? "#0000a0" : "#c80000"} fillOpacity="0.5" />
          </g>
        );
      })}
      {P(FB[3][1]).map(([a, b]) => (
        <g key={a}>
          <rect x={a} y="933" width={b - a} height={at(FORCE, a + 3) - 933} fill="#640000" />
          <rect x={a} y={at(FORCE, a + 3)} width={b - a} height={993 - at(FORCE, a + 3)} fill="#28008c" />
        </g>
      ))}
    </Row>
  );
}

/* ---------- icons ---------- */
const Ic = ({ children, w = 18, vb = "0 0 18 18" }) => (
  <svg width={w} height={w} viewBox={vb} fill="none" className="shrink-0">{children}</svg>
);
const hline = (c) => <Ic><path d="M0 9H18" stroke={c} strokeWidth="2" /></Ic>;
const dline = (c, w = 2) => <Ic><path d="M1 18L17 1" stroke={c} strokeWidth={w} /></Ic>;
const Plus = ({ x, y }) => <path d={`M${x - 2} ${y}h4M${x} ${y - 2}v4`} stroke="#0000dc" strokeWidth="1.200" />;
const ellipse = (c) => (
  <Ic><ellipse cx="9" cy="9.500" rx="6.500" ry="5" stroke={c} strokeWidth="1.500" fill={c} fillOpacity="0.2" /><Plus x={15.500} y={4} /><Plus x={2.500} y={15} /></Ic>
);
const Glass = () => <><circle cx="7" cy="7" r="4.500" fill="#b5c9d4" stroke="#222b30" strokeWidth="1.400" /><path d="M10.500 10.500L16 16.500" stroke="#222b30" strokeWidth="2.500" /></>;
const Bell = () => <path d="M9 3C6 3 5.500 6 5.500 8.500S4 12 3 13.200h12C14 12 12.500 11 12.500 8.500S12 3 9 3zM7.500 14h3l-1.500 2z" fill="#ffd91a" stroke="#8a6a00" strokeWidth="0.800" />;
const F = () => <path d="M12.500 15V8.500h5M12.500 11.500h4" stroke="#0000ff" strokeWidth="1.900" />;
const hseg = (c) => <Ic><path d="M6 9h12" stroke={c} strokeWidth="2" /><circle cx="5.500" cy="9" r="1.500" stroke={c} /></Ic>;

const TOOLS = [
  ["Cursor", <Ic><path d="M6 3v10l2.500-2 1.800 4 1.900-.8-1.800-4H13.500z" fill="#e4ecf0" stroke="#5c6b73" strokeWidth="0.900" /></Ic>],
  ["Lupa", <Ic><Glass /></Ic>],
  ["Zoom de área", <Ic><path d="M1 8v8h9" stroke="#1a5fd0" strokeDasharray="2 1" /><g transform="translate(2 -1)"><Glass /></g></Ic>],
  ["Alerta con cursor", <Ic><g transform="translate(-2 1)"><Bell /></g><path d="M2 4h12" stroke="#111" strokeWidth="1.500" /><path d="M11 1l6 6M17 1l-6 6" stroke="#1414dc" strokeWidth="1.200" /><path d="M12 6v8l2-1.500 1.500 3 1.500-.7-1.500-3H18z" fill="#fff" stroke="#667" strokeWidth="0.600" /></Ic>],
  ["Alerta", <Ic><Bell /><path d="M2 2c-1 1.500-1 3 0 5M16 2c1 1.500 1 3 0 5" stroke="#556" /></Ic>],
  ["Extensión de Fibonacci", <Ic><path d="M1 13L4 4l3 7h5" stroke="#111" strokeWidth="1.500" /><path d="M7 5.500h10M10 8h6" stroke="#f59050" strokeDasharray="2 1" /><Plus x={3} y={3} /><Plus x={2} y={13} /><F /></Ic>],
  ["Retroceso de Fibonacci", <Ic><path d="M4 5.500h12" stroke="#f59050" strokeDasharray="2 1" strokeWidth="1.500" /><path d="M4 8.500h8" stroke="#3c3cdc" strokeDasharray="2 1" strokeWidth="1.500" /><F /></Ic>],
  ["Zonas de Fibonacci", <Ic><path d="M4 2h12" stroke="#e0d060" /><path d="M4 5h12" stroke="#3fae4e" strokeDasharray="2 1" strokeWidth="2" /><path d="M3 8h9M3 13h9" stroke="#dbe6ee" /><F /></Ic>],
  ["Rectángulo azul", <Ic><rect x="3" y="5" width="12" height="8" stroke="#6fa0f5" strokeWidth="1.500" /><Plus x={15} y={4} /><Plus x={3} y={14} /></Ic>],
  ["Rectángulo rojo", <Ic><rect x="3" y="5" width="12" height="8" stroke="#e81818" strokeWidth="2" fill="#b9a6ae" /><Plus x={15} y={4} /><Plus x={3} y={14} /></Ic>],
  ["Flecha", <Ic><path d="M4 14l7-6" stroke="#111" strokeWidth="2" /><circle cx="3.500" cy="14" r="1.500" fill="#9cb9c9" stroke="#111" /><path d="M17 3l-2 8-5-5.500z" fill="#111" /></Ic>],
  ["Nota", <Ic><path d="M4 2h10q2 0 2 2v8l-4 4H4q-2 0-2-2V4q0-2 2-2z" fill="#a9c6e6" stroke="#6fa0f5" /><path d="M5.500 5h7v2M9 5v8M7 13h4M5.500 5v2" stroke="#111" strokeWidth="1.800" /></Ic>],
  ["Globo", <Ic><path d="M9 1.500a7 7 0 1 1-2 13.500l-4 2 1-4A7 7 0 0 1 9 1.500z" fill="#a9c9d6" stroke="#6fa0f5" /><path d="M5.500 5h7v2M9 5v7M7 12h4M5.500 5v2" stroke="#1a7a2a" strokeWidth="1.800" /></Ic>],
  ["Segmento", <Ic><path d="M4 14L14 4" stroke="#111" strokeWidth="1.300" /><circle cx="4" cy="14" r="2" fill="#9cb9c9" stroke="#111" /><circle cx="14.500" cy="4" r="2" fill="#9cb9c9" stroke="#111" /></Ic>],
  ["Semirrecta verde", hseg("#2fa84a")],
  ["Semirrecta roja", hseg("#ff1010")],
  ["Regla", <Ic><path d="M2 13L13 1.500l3.500 3.500L5.500 16.500z" fill="#a9bdc8" stroke="#4c5860" /><path d="M5 10l1.500 1.500M7 8l1.500 1.500M9 6l1.500 1.500M11 4l1.500 1.500" stroke="#4c5860" /></Ic>],
  ["Canal", <Ic><path d="M0 1h18v7H0z" fill="#7fb89a" /><path d="M0 10h18v7H0z" fill="#b08ea0" /><path d="M1 14l4-8 4 7 3-6 2 3 2-7" stroke="#c0d0ff" strokeWidth="1.300" /><path d="M0 1h18" stroke="#2a8a4a" strokeDasharray="1 1" /><path d="M0 17h18" stroke="#c03030" strokeDasharray="1 1" /></Ic>],
  ["Elipse roja", ellipse("#e01818")],
  ["Elipse marrón", ellipse("#8a5a2a")],
  ["Elipse verde", ellipse("#1d8a2d")],
  ["Elipse lima", ellipse("#20f030")],
  ["Línea negra", dline("#111", 1.3)],
  ["Línea verde", dline("#35b535")],
  ["Línea roja", dline("#ff1010")],
  ["Horizontal negra", <Ic><path d="M0 9.500H18" stroke="#111" strokeWidth="1" /></Ic>],
  ["Horizontal salmón", hline("#f59080")],
  ["Horizontal lima", hline("#10f010")],
  ["Horizontal verde", hline("#108a10")],
  ["Horizontal roja", hline("#ff1010")],
  ["Horizontal celeste", hline("#6496ff")],
  ["Horizontal azul", hline("#0a0aaa")],
  ["Vertical", <Ic><path d="M9.500 1V18" stroke="#111" /></Ic>],
  ["Ángulo", <Ic><path d="M17 16H2L12 4" stroke="#e86060" strokeWidth="1.300" /><path d="M9 8q3 2 3 6M8 12l2-3" stroke="#0000dc" strokeWidth="1.500" /><circle cx="14.500" cy="9" r="2" stroke="#0000dc" /></Ic>],
  ["Círculo", <Ic><circle cx="8.500" cy="10" r="6" stroke="#f08c50" strokeWidth="1.300" /><Plus x={8.500} y={10} /><Plus x={15} y={5} /></Ic>],
  ["Onda de impulso", <Ic><path d="M2 6l3 9 4-12 4 8 3-8" stroke="#4c7cf0" strokeDasharray="2 1" strokeWidth="1.300" /><Plus x={3} y={6} /><Plus x={9} y={4} /><Plus x={15} y={4} /><Plus x={6} y={15} /><Plus x={14} y={11} /></Ic>],
  ["Onda correctiva", <Ic><path d="M3 3l12 11M9 3l-5 12" stroke="#4c7cf0" /><Plus x={3} y={13} /><Plus x={12} y={4} /><Plus x={15} y={15} /></Ic>],
  ["Aceptar", <Ic><path d="M2 10l4 5L17 3l-3-1.500L6.500 10 4.500 7.500z" fill="#3cc83c" stroke="#1a7a1a" strokeWidth="0.800" /></Ic>],
  ["Me gusta", <Ic><path d="M2 8h3v8H2zM5.500 8.500L9 5l1-3.500q2.500 0 2 3L11.500 7H16q1 4-1 9H6z" fill="#3cc83c" stroke="#1a8a1a" strokeWidth="0.800" /></Ic>],
  ["Rechazar", <Ic><path d="M4 1.500l5 4.500 5-4.500 2.500 3L12 9l4.500 4.500-2.500 3L9 12l-5 4.500-2.500-3L6 9 1.500 4.500z" fill="#f01010" /></Ic>],
  ["Aviso", <Ic><path d="M9 2l8 14.500H1z" fill="#ffb030" stroke="#c07810" /><path d="M9 6.500v5M9 13v1.800" stroke="#222" strokeWidth="1.800" /></Ic>],
];

const Chevron = () => <svg width="7" height="5" viewBox="0 0 7 5" fill="none" className="shrink-0"><path d="M1 1l2.500 2.500L6 1" stroke="#22303a" strokeWidth="1.400" /></svg>;
const Sep = () => <span className="h-full w-px shrink-0 bg-[#7d9cab]" />;

function Pick({ label, value, className }) {
  return (
    <label className={`flex items-center justify-between px-[5px] ${className}`}>
      <select aria-label={label} defaultValue={value} className="w-full cursor-pointer appearance-none bg-transparent text-[9px] font-bold outline-none">
        <option>{value}</option>
      </select>
      <Chevron />
    </label>
  );
}

const FRAMES = [
  ["144s", "w-[25px]"], ["12m", "w-[24px]"], ["56m", "w-[24px]"], ["1h", "w-[17px]"], ["4h", "w-[17px]"],
  ["D", "w-[13px]"], ["W", "w-[13px]"], ["M", "w-[13px]"], ["Q", "w-[13px]"],
];

function Toolbar() {
  const btn = "flex h-4 items-center justify-center rounded-sm border border-[#7b9aa9]";
  return (
    <header className="flex h-5 shrink-0 items-center overflow-hidden border-b-2 border-[#4c6c7d] bg-linear-to-b from-[#b6d5e3] to-[#9dbaca] text-[9px] font-bold text-black">
      <div className="flex w-5 justify-center">
        <Ic w={16}><g fill="#1d9a2d"><path d="M1 9h3v6H1zM7 6h3v6H7zM13 3h3v6h-3z" /><path d="M2 7h1v10H2zM8 4h1v10H8zM14 1h1v10h-1z" fill="#1c6a28" /></g></Ic>
      </div>
      <Sep />
      <div className="flex w-[13px] justify-center"><Ic w={14}><g stroke="#6d7f88" strokeWidth="1.600"><rect x="5" y="1" width="3" height="7" rx="1.500" /><rect x="10" y="1" width="3" height="7" rx="1.500" /><rect x="5" y="10" width="3" height="7" rx="1.500" /><rect x="10" y="10" width="3" height="7" rx="1.500" /></g></Ic></div>
      <Sep />
      <Pick label="Valor" value="DOW" className="w-[45px]" />
      <Sep />
      <div className="flex gap-[3px] px-[3px]">
        {FRAMES.map(([t, w]) => <button key={t} className={`${btn} ${w} ${t === "4h" ? "bg-[#87a3b1]" : "bg-[#a9c6d4]"}`}>{t}</button>)}
      </div>
      <Sep />
      <Pick label="Periodo" value="4 horas" className="w-[54px]" />
      <Sep />
      <div className="flex gap-[3px] px-[3px]">
        <button className={`${btn} w-[22px] bg-[#a9c6d4]`}>5kU</button>
        <button className={`${btn} w-[28px] bg-[#a9c6d4]`}>10kU</button>
      </div>
      <Sep />
      <Pick label="Unidades" value="200 unidades" className="w-[80px]" />
      <Sep />
      <button className="flex w-[85px] items-center gap-1 px-[5px]">
        <Ic w={17}><path d="M0 3c4-3 5 8 9 5s4-5 9-3" stroke="#e04040" strokeWidth="1.300" /><path d="M0 9c4 1 5-7 9-6s5 6 9 6" stroke="#209a30" strokeWidth="1.300" /><path d="M1 18v-4h4v-2h3v4h4v-3h4v5z" fill="#10b020" /><path d="M5 18v-2h3v2zM12 18v-3h2v3z" fill="#e02020" /></Ic>
        Indicadores
      </button>
      <Sep />
      <button className="flex w-3 justify-center" aria-label="Más indicadores"><Chevron /></button>
      <Sep />
      <span className="ml-2 flex h-[10px] w-[10px] items-center justify-center bg-[#eef2f4] text-[9px] leading-none text-[#7c8a92]">i</span>
      <span className="ml-2 h-[7px] w-[7px] rounded-full bg-[#3e9410]" />
      <span className="ml-[5px] flex h-[14px] w-[40px] items-center justify-center rounded-xs bg-[#40d840] font-normal whitespace-nowrap text-white">+0,09 %</span>
      <span className="ml-1">12:03:38</span>
      <span className="ml-1 font-normal whitespace-nowrap">Wall Street Cash (1€)</span>
      <span className="flex-1" />
      <Sep />
      <button className="flex w-[19px] justify-center" aria-label="Actualizar">
        <Ic w={16}><path d="M12 2C6 0 4 4 4.500 9" stroke="#e84a50" strokeWidth="2.500" /><path d="M0 8h9l-4.500 5z" fill="#e84a50" /><path d="M7 16c6 1.500 7-2 6.500-7" stroke="#18a830" strokeWidth="2.500" /><path d="M9 9.500h9L13.500 4z" fill="#18a830" /></Ic>
      </button>
      <Sep />
      <div className="flex w-11 items-center justify-between px-1.5 text-[#6d8794]">
        <svg width="8" height="8" viewBox="0 0 8 8"><path d="M0 7h8" stroke="currentColor" strokeWidth="1.500" /></svg>
        <svg width="8" height="8" viewBox="0 0 8 8" fill="none" stroke="currentColor"><path d="M2.500 2.500v-2h5v4h-2M.5 2.500h5v5h-5z" /></svg>
        <svg width="8" height="8" viewBox="0 0 8 8"><path d="M0 0l8 8M8 0L0 8" stroke="currentColor" strokeWidth="1.800" /></svg>
      </div>
    </header>
  );
}

function Sidebar() {
  return (
    <aside className="flex w-[25px] shrink-0 flex-col border-r border-[#6c8791] bg-[#9cb9c8]">
      <button className="flex h-3 shrink-0 items-center justify-center border-b border-[#7d9cab] bg-[#a9c6d4]" aria-label="Subir">
        <svg width="7" height="4" viewBox="0 0 7 4" fill="none"><path d="M1 3.500L3.500 1 6 3.500" stroke="#5d7480" /></svg>
      </button>
      <div className="mt-px flex min-h-0 flex-1 flex-col overflow-hidden">
        {TOOLS.map(([name, icon], i) => (
          <button key={name} aria-label={name} className={`flex h-[22px] shrink-0 items-center justify-center pr-1 ${i === 0 ? "rounded-sm border border-[#6c8791] bg-[#8aa5b3]" : ""}`}>{icon}</button>
        ))}
      </div>
      <button className="flex h-[11px] shrink-0 items-center justify-center border-y border-[#7d9cab] bg-[#b6d5e3]" aria-label="Bajar"><Chevron /></button>
      <button className="flex h-7 shrink-0 items-center justify-center pr-0.5" aria-label="Ajustes">
        <Ic w={20} vb="0 0 20 20"><rect x="6" y="3" width="9" height="12" fill="#f4f6f7" stroke="#8a979e" /><path d="M7 12l3-5 3 3" stroke="#e04040" /><circle cx="5" cy="5" r="4" fill="#1d8a2d" /><path d="M4 4l1.300-1V8" stroke="#fff" strokeWidth="1.200" /><path d="M9 18l5-6M14 9a3 3 0 1 1 2 5" stroke="#333" strokeWidth="2.500" /><path d="M9 18l5-6" stroke="#fff" strokeWidth="1" /><path d="M14 17h6l-3 3z" fill="#111" /></Ic>
      </button>
      <button className="flex h-7 shrink-0 items-end justify-center pb-1" aria-label="Más">
        <Ic w={18}><g fill="#333"><circle cx="4" cy="8" r="1.500" /><circle cx="9" cy="8" r="1.500" /><circle cx="14" cy="8" r="1.500" /></g><path d="M10 13h6l-3 3z" fill="#111" /></Ic>
      </button>
    </aside>
  );
}

const BOTTOM_RIGHT = [
  ["Deshacer", <Ic w={16}><path d="M4 6h7q5 1 4 6-1 3-4 5 2-6-3-7H4z" fill="#1d5fd8" /><path d="M7 1v12L0 7z" fill="#1d5fd8" /></Ic>],
  ["Rehacer", <Ic w={16}><path d="M14 6H7Q2 7 3 12q1 3 4 5-2-6 3-7h4z" fill="#6f9bd0" /><path d="M11 1v12l7-6z" fill="#6f9bd0" /></Ic>],
  ["Configurar", <Ic w={17}><rect x="11" y="1" width="5" height="14" fill="#30c840" stroke="#187a20" /><rect x="2" y="8" width="5" height="8" fill="#f05050" stroke="#a01818" /><path d="M3 17l7-7M9 11a3.500 3.500 0 0 1 4-6" stroke="#222" strokeWidth="3" /><path d="M3 17l7-7" stroke="#fff" strokeWidth="1.200" /></Ic>],
  ["Ajustar", <Ic w={18}><circle cx="7" cy="7" r="5" fill="#d5dde2" stroke="#444" strokeWidth="1.300" /><path d="M10.500 10.500L15 16" stroke="#222" strokeWidth="2.500" /><path d="M16 2v9M14.500 4L16 2l1.500 2M14.500 9l1.500 2 1.500-2M1 16h9M3 14.500L1 16l2 1.500M8 14.500l2 1.500-2 1.500" stroke="#0000f0" /></Ic>],
  ["Alejar", <Ic w={17}><circle cx="7" cy="7" r="5" fill="#eef2f5" stroke="#444" strokeWidth="1.300" /><path d="M10.500 10.500L16 17" stroke="#222" strokeWidth="2.800" /><path d="M4.500 7h5" stroke="#0000f0" strokeWidth="1.800" /></Ic>],
  ["Acercar", <Ic w={17}><circle cx="7" cy="7" r="5" fill="#eef2f5" stroke="#444" strokeWidth="1.300" /><path d="M10.500 10.500L16 17" stroke="#222" strokeWidth="2.800" /><path d="M4.500 7h5M7 4.500v5" stroke="#0000f0" strokeWidth="1.800" /></Ic>],
  ["Anclar", <Ic w={17}><path d="M0 5h18" stroke="#333" strokeWidth="4" strokeDasharray="2 1" /><path d="M9 9v6M6 12.500l3 3.500 3-3.500" stroke="#1d5fd8" strokeWidth="2" /></Ic>],
];
const BOTTOM_LEFT = [
  ["Compartir", <Ic w={16}><path d="M14 3L5 9l9 6" stroke="#fff" strokeWidth="2" /><circle cx="14" cy="3" r="2.500" fill="#fff" /><circle cx="4" cy="9" r="3" fill="#fff" /><circle cx="13" cy="14" r="2.500" fill="#fff" /><path d="M12 14h6l-3 3z" fill="#111" /></Ic>],
  ["Chat", <Ic w={16}><path d="M1 1h11v9H5l-3 3v-3H1z" fill="#c5dcf4" stroke="#6f9bd0" /><path d="M5 6h12v8h-2v3l-3-3H5z" fill="#2a70e0" /><path d="M8 10h1.500M10.500 10H12M13 10h1.500" stroke="#fff" strokeWidth="1.500" /></Ic>],
  ["Informe", <Ic w={16}><rect x="3" y="1" width="12" height="16" fill="#fff" stroke="#555" /><path d="M5 4h5M5 7h5" stroke="#333" /><path d="M11 4l3 1-2 3z" fill="#1d9a2d" /><path d="M5 10l3-2 2 3 4 4" stroke="#e02020" strokeWidth="1.600" /><path d="M6 13l3 2 4-5" stroke="#1d9a2d" strokeWidth="1.500" /></Ic>],
  ["Libro de órdenes", <Ic w={16}><path d="M5 1h8v4H5zM3 7h14v4H3zM5 13h12v4H5z" fill="#10b828" stroke="#0a6a18" /><path d="M1 3h4M1 15h4M12 6h5" stroke="#d02020" strokeWidth="2" /></Ic>],
  ["Ventanas", <Ic w={17}><rect x="1" y="1" width="11" height="9" fill="#fff" stroke="#2a60d0" strokeWidth="1.500" /><path d="M1 2.500h11" stroke="#2a60d0" strokeWidth="3" /><rect x="6" y="7" width="11" height="10" fill="#fff" stroke="#2a60d0" strokeWidth="1.500" /><path d="M6 8h11" stroke="#2a60d0" strokeWidth="2.500" /><path d="M8 15l2-3 2 2 3-4" stroke="#18a030" /></Ic>],
];

function BottomBar() {
  return (
    <footer className="flex h-5 shrink-0 items-center border-t border-[#6c8791] bg-[#9cb9c8]">
      <button className="flex h-full w-[25px] shrink-0 items-center justify-center border-r border-[#6c8791]" aria-label="Dibujar">
        <Ic w={18}><path d="M2 16L6 4l3 8 3-8" stroke="#1d8a2d" strokeWidth="1.500" /><path d="M2 3l6 13" stroke="#e02020" strokeWidth="1.500" /><path d="M9 16l1-4 5-9 3 1.500-5 9z" fill="#ffd81a" stroke="#5a4a10" strokeWidth="0.800" /></Ic>
      </button>
      {BOTTOM_LEFT.map(([n, i]) => <button key={n} aria-label={n} className="flex w-[21px] shrink-0 items-center justify-center">{i}</button>)}
      <button className="flex w-[15px] shrink-0 items-center justify-center" aria-label="Plegar">
        <svg width="8" height="7" viewBox="0 0 8 7" fill="none"><path d="M3.500 .5l-3 3 3 3M7.500 .5l-3 3 3 3" stroke="#33434c" /></svg>
      </button>
      <div className="flex h-3 min-w-0 flex-1 border border-[#6c8791]">
        <button className="flex w-3 shrink-0 items-center justify-center border-r border-[#6c8791] bg-[#b4d2e0]" aria-label="Anterior">
          <svg width="4" height="6" viewBox="0 0 4 6" fill="none"><path d="M3.500 .5L1 3l2.500 2.500" stroke="#111" strokeWidth="1.300" /></svg>
        </button>
        <div className="flex-[2] bg-[#9cb9c8]" />
        <div className="flex-1 border-l border-[#6c8791] bg-linear-to-b from-[#bad8e5] to-[#9ebccb]" />
        <button className="flex w-3 shrink-0 items-center justify-center border-l border-[#6c8791] bg-[#b4d2e0]" aria-label="Siguiente">
          <svg width="4" height="6" viewBox="0 0 4 6" fill="none"><path d="M.5 .5L3 3 .5 5.500" stroke="#111" strokeWidth="1.300" /></svg>
        </button>
      </div>
      <div className="ml-1 flex w-[147px] shrink-0 overflow-hidden">
        {BOTTOM_RIGHT.map(([n, i]) => <button key={n} aria-label={n} className="flex w-[22px] shrink-0 items-center justify-center">{i}</button>)}
      </div>
    </footer>
  );
}

function TimeAxis() {
  return (
    <div className="flex bg-white">
      <div className="relative flex-1">
        {GRID_X.map((x) => <span key={x} className="absolute top-0 h-[3px] w-px bg-[#6c8791]" style={{ left: pctX(x) }} />)}
        {DAYS.map((d) => (
          <span key={d.x} className="absolute top-[3px] -translate-x-1/2 text-[9px] leading-[11px] font-bold" style={{ left: pctX(d.x) }}>{d.t}</span>
        ))}
      </div>
      <div className="w-10 shrink-0" />
    </div>
  );
}

export default function App() {
  return (
    <div className="flex h-screen flex-col overflow-hidden bg-white font-['Liberation_Sans',Arial,sans-serif] text-black">
      <Toolbar />
      <div className="flex min-h-0 flex-1">
        <Sidebar />
        <main className="grid min-w-0 flex-1 grid-rows-[627fr_128fr_74fr_84fr_61fr_14px]">
          <MainChart />
          <TrenesChart />
          <WillyChart />
          <AwesomeChart />
          <ForceChart />
          <TimeAxis />
        </main>
      </div>
      <BottomBar />
    </div>
  );
}
